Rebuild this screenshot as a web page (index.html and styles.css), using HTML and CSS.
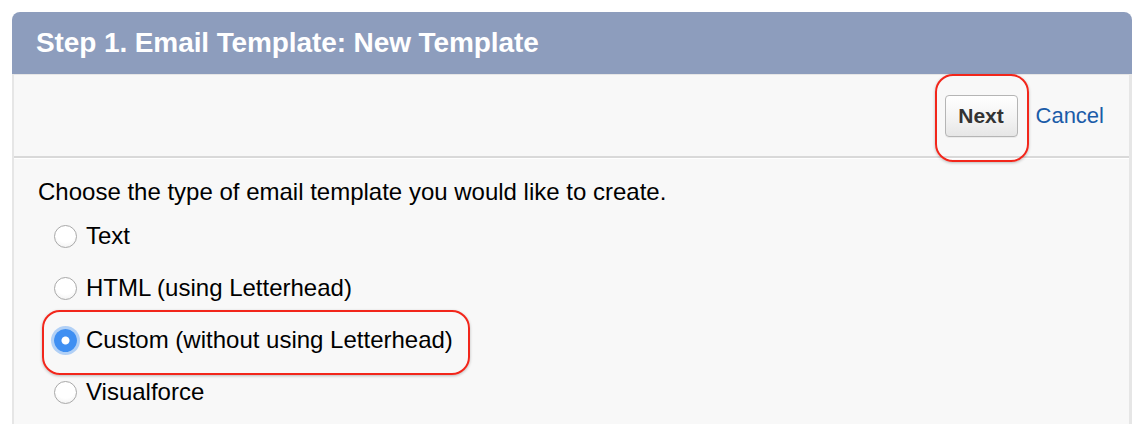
FILE: index.html
```html
<!DOCTYPE html>
<html>
<head>
<meta charset="utf-8">
<link rel="stylesheet" href="styles.css">
</head>
<body>
<div class="panel">
  <div class="panel-header"><h2 class="title">Step 1. Email Template: New Template</h2></div>
  <div class="panel-body">
    <div class="toolbar">
      <div class="actions">
        <button class="btn" type="button">Next</button>
        <a class="link" href="#">Cancel</a>
        <span class="mark mark-next"></span>
      </div>
    </div>
    <div class="content">
      <p class="prompt">Choose the type of email template you would like to create.</p>
      <ul class="options">
        <li class="option"><span class="radio"></span><span class="label">Text</span></li>
        <li class="option"><span class="radio"></span><span class="label">HTML (using Letterhead)</span></li>
        <li class="option selected"><span class="radio checked"></span><span class="label">Custom (without using Letterhead)</span><span class="mark mark-custom"></span></li>
        <li class="option"><span class="radio"></span><span class="label">Visualforce</span></li>
      </ul>
    </div>
  </div>
</div>
</body>
</html>
```

FILE: styles.css
```css
html, body {
  margin: 0;
  padding: 0;
  background: #ffffff;
  font-family: "Liberation Sans", Arial, Helvetica, sans-serif;
  color: #000;
}
.panel {
  margin: 12px 12px 0 12px;
  width: 1120px;
  height: 412px;
  display: flex;
  flex-direction: column;
}
.panel-header {
  background: #8d9dbd;
  border-radius: 8px 8px 0 0;
  height: 62px;
  display: flex;
  align-items: center;
  padding-left: 24px;
}
.title {
  margin: 0;
  color: #ffffff;
  font-size: 28px;
  font-weight: bold;
  letter-spacing: -0.1px;
}
.panel-body {
  flex: 1;
  background: #f8f8f8;
  border-left: 2px solid #e6e6e6;
  border-right: 3px solid #e6e6e6;
  border-top: 1px solid #e6e6e6;
}
.toolbar {
  height: 81px;
  border-bottom: 2px solid #d9d9d9;
  display: flex;
  justify-content: flex-end;
  align-items: center;
  padding-right: 25px;
}
.actions {
  position: relative;
  display: flex;
  align-items: center;
  gap: 18px;
}
.btn {
  font-family: inherit;
  font-size: 21px;
  font-weight: bold;
  color: #333;
  height: 42px;
  width: 73px;
  border: 1px solid #b5b5b5;
  border-radius: 4px;
  background: linear-gradient(#ffffff, #f2f2f2 60%, #e6e6e6);
  box-shadow: 0 1px 0 rgba(0,0,0,0.05);
  padding: 0;
  margin-top: 1px;
}
.link {
  color: #1b5ca8;
  text-decoration: none;
  font-size: 22px;
  margin-top: 1px;
}
.content {
  padding: 19px 0 0 24px;
  border-top: 1px solid #ffffff;
}
.prompt {
  margin: 0;
  font-size: 24px;
  line-height: 28px;
}
.options {
  list-style: none;
  margin: 4px 0 0 0;
  padding: 0 0 0 16px;
}
.option {
  position: relative;
  display: flex;
  align-items: center;
  height: 52px;
  font-size: 24px;
}
.radio {
  box-sizing: border-box;
  width: 23px;
  height: 23px;
  border-radius: 50%;
  border: 1px solid #a9a9a9;
  background: radial-gradient(circle at 50% 30%, #ffffff 55%, #ececec 100%);
  margin-right: 9px;
  flex: none;
}
.radio.checked {
  border: none;
  background: radial-gradient(circle, #ffffff 0 3.5px, #3f8ff2 4.5px);
  box-shadow: 0 0 0 3px rgba(90, 160, 245, 0.45);
}
.mark {
  position: absolute;
  border: 2px solid #f2261b;
  border-radius: 18px;
  box-shadow: 0 1px 3px rgba(0,0,0,0.25);
  pointer-events: none;
}
.mark-next {
  left: -10px;
  top: -20px;
  width: 90px;
  height: 84px;
}
.mark-custom {
  left: -12px;
  top: -4px;
  width: 424px;
  height: 61px;
}
```
